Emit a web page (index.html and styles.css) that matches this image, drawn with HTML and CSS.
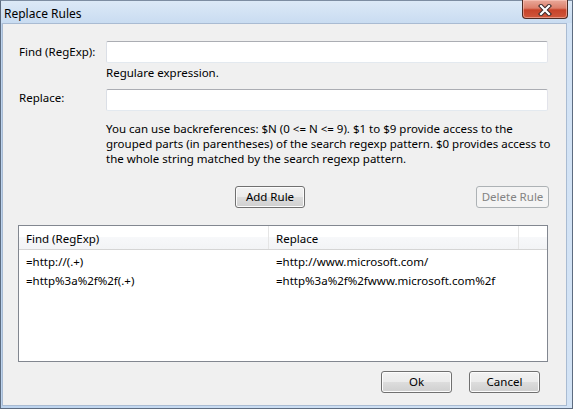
FILE: index.html
```html
<!DOCTYPE html>
<html>
<head>
<meta charset="utf-8">
<link rel="stylesheet" href="styles.css">
</head>
<body>
<div class="window">
  <div class="titlebar">
    <span class="title">Replace Rules</span>
    <div class="close">
      <svg width="14" height="12" viewBox="0 0 14 12">
        <path d="M3 2 L11 10 M11 2 L3 10" stroke="#3b2b2b" stroke-width="4.2" stroke-linecap="square" fill="none"/>
        <path d="M3 2 L11 10 M11 2 L3 10" stroke="#ffffff" stroke-width="2.2" stroke-linecap="square" fill="none"/>
      </svg>
    </div>
  </div>
  <div class="client">
    <div class="row first">
      <label class="label">Find (RegExp):</label>
      <div class="input"></div>
    </div>
    <div class="hint">Regulare expression.</div>
    <div class="row second">
      <label class="label">Replace:</label>
      <div class="input"></div>
    </div>
    <div class="help">You can use backreferences: $N (0 &lt;= N &lt;= 9). $1 to $9 provide access to the<br>grouped parts (in parentheses) of the search regexp pattern. $0 provides access to<br>the whole string matched by the search regexp pattern.</div>
    <div class="actions">
      <button class="btn add">Add Rule</button>
      <button class="btn delete" disabled>Delete Rule</button>
    </div>
    <div class="list">
      <div class="list-head">
        <div class="col c1">Find (RegExp)</div>
        <div class="col c2">Replace</div>
        <div class="col c3"></div>
      </div>
      <div class="list-body">
        <div class="list-row">
          <div class="cell c1">=http://(.+)</div>
          <div class="cell c2">=http://www.microsoft.com/</div>
        </div>
        <div class="list-row">
          <div class="cell c1">=http%3a%2f%2f(.+)</div>
          <div class="cell c2">=http%3a%2f%2fwww.microsoft.com%2f</div>
        </div>
      </div>
    </div>
    <div class="footer">
      <button class="btn ok">Ok</button>
      <button class="btn cancel">Cancel</button>
    </div>
  </div>
</div>
</body>
</html>
```

FILE: styles.css
```css
* { box-sizing: border-box; }
html, body { margin: 0; padding: 0; }
body {
  width: 573px;
  height: 409px;
  overflow: hidden;
  font-family: "Noto Sans", "Open Sans", sans-serif;
  font-size: 11.5px;
  color: #000;
}
.window {
  width: 573px;
  height: 409px;
  display: flex;
  flex-direction: column;
  background: linear-gradient(to right, #bcd3ee, #c9dcf2 40%, #d3e3f5);
  border: 1px solid #5d6c80;
  border-top-color: #7d8da2;
  padding: 0 5px 2px 1px;
}
.titlebar {
  height: 22px;
  display: flex;
  align-items: flex-start;
  background: linear-gradient(#dce9f7, #c9dcf1);
  margin: 0 -5px 0 -1px;
  padding: 0 4px 0 3px;
}
.title {
  line-height: 15px;
  padding-top: 5px;
  font-size: 12px;
  color: #000;
}
.close {
  margin-left: auto;
  width: 46px;
  height: 19px;
  margin-top: -1px;
  border: 1px solid #4e2c25;
  border-top: none;
  border-radius: 0 0 4px 4px;
  background: linear-gradient(#e9a99a 0%, #dc7f6b 45%, #c7432a 55%, #d0573c 100%);
  box-shadow: inset 0 0 0 1px rgba(255, 210, 200, 0.5);
  display: flex;
  align-items: center;
  justify-content: center;
}
.close svg { display: block; margin-top: 1px; }
.client {
  flex: 1;
  background: #f0f0f0;
  border: 1px solid #a9bbd2;
  padding: 17px 18px 0 16px;
  display: flex;
  flex-direction: column;
}
.row {
  display: flex;
  align-items: flex-start;
}
.label {
  width: 87px;
  line-height: 15px;
  padding-top: 3px;
}
.row.second .label { padding-top: 1px; }
.input {
  flex: 1;
  height: 22px;
  background: #fff;
  border: 1px solid;
  border-color: #abadb3 #e2e3ea #e3e9ef #dbdfe6;
  border-radius: 2px;
}
.hint {
  margin-left: 87px;
  margin-top: 2px;
  line-height: 15px;
}
.row.second { margin-top: 9px; }
.help {
  margin-left: 87px;
  margin-top: 10px;
  line-height: 15px;
  white-space: nowrap;
}
.actions {
  display: flex;
  margin-top: 20px;
}
.btn {
  font-family: "Noto Sans", "Open Sans", sans-serif;
  font-size: 11.5px;
  height: 22px;
  padding: 0;
  border: 1px solid #707070;
  border-radius: 3px;
  background: linear-gradient(#f2f2f2 0%, #ebebeb 50%, #dddddd 50%, #cfcfcf 100%);
  box-shadow: inset 0 0 0 1px #fcfcfc;
  color: #000;
  line-height: 18px;
}
.add { width: 70px; margin-left: 216px; }
.delete {
  width: 73px;
  margin-left: auto;
  margin-right: -1px;
  border-color: #adb2b5;
  background: #f4f4f4;
  box-shadow: none;
  color: #838383;
}
.list {
  margin-top: 17px;
  margin-left: -1px;
  height: 137px;
  border: 1px solid #828790;
  background: #fff;
}
.list-head {
  display: flex;
  height: 24px;
  border-bottom: 1px solid #d5d5d5;
  background: linear-gradient(#ffffff, #ffffff 50%, #f7f8fa 50%, #f3f4f6);
}
.col {
  line-height: 15px;
  padding: 5px 0 0 7px;
  border-right: 1px solid #e5e5e5;
}
.list-head .c1 { width: 250px; }
.list-head .c2 { width: 250px; }
.list-head .c3 { flex: 1; border-right: none; }
.list-body { padding-top: 2px; }
.list-row {
  display: flex;
  height: 19px;
  align-items: center;
}
.cell { padding-left: 7px; line-height: 15px; }
.list-row .c1 { width: 250px; }
.list-row .c2 { width: 250px; }
.footer {
  display: flex;
  justify-content: flex-end;
  gap: 17px;
  margin-top: 9px;
  margin-right: 8px;
}
.ok, .cancel { width: 71px; }
```
